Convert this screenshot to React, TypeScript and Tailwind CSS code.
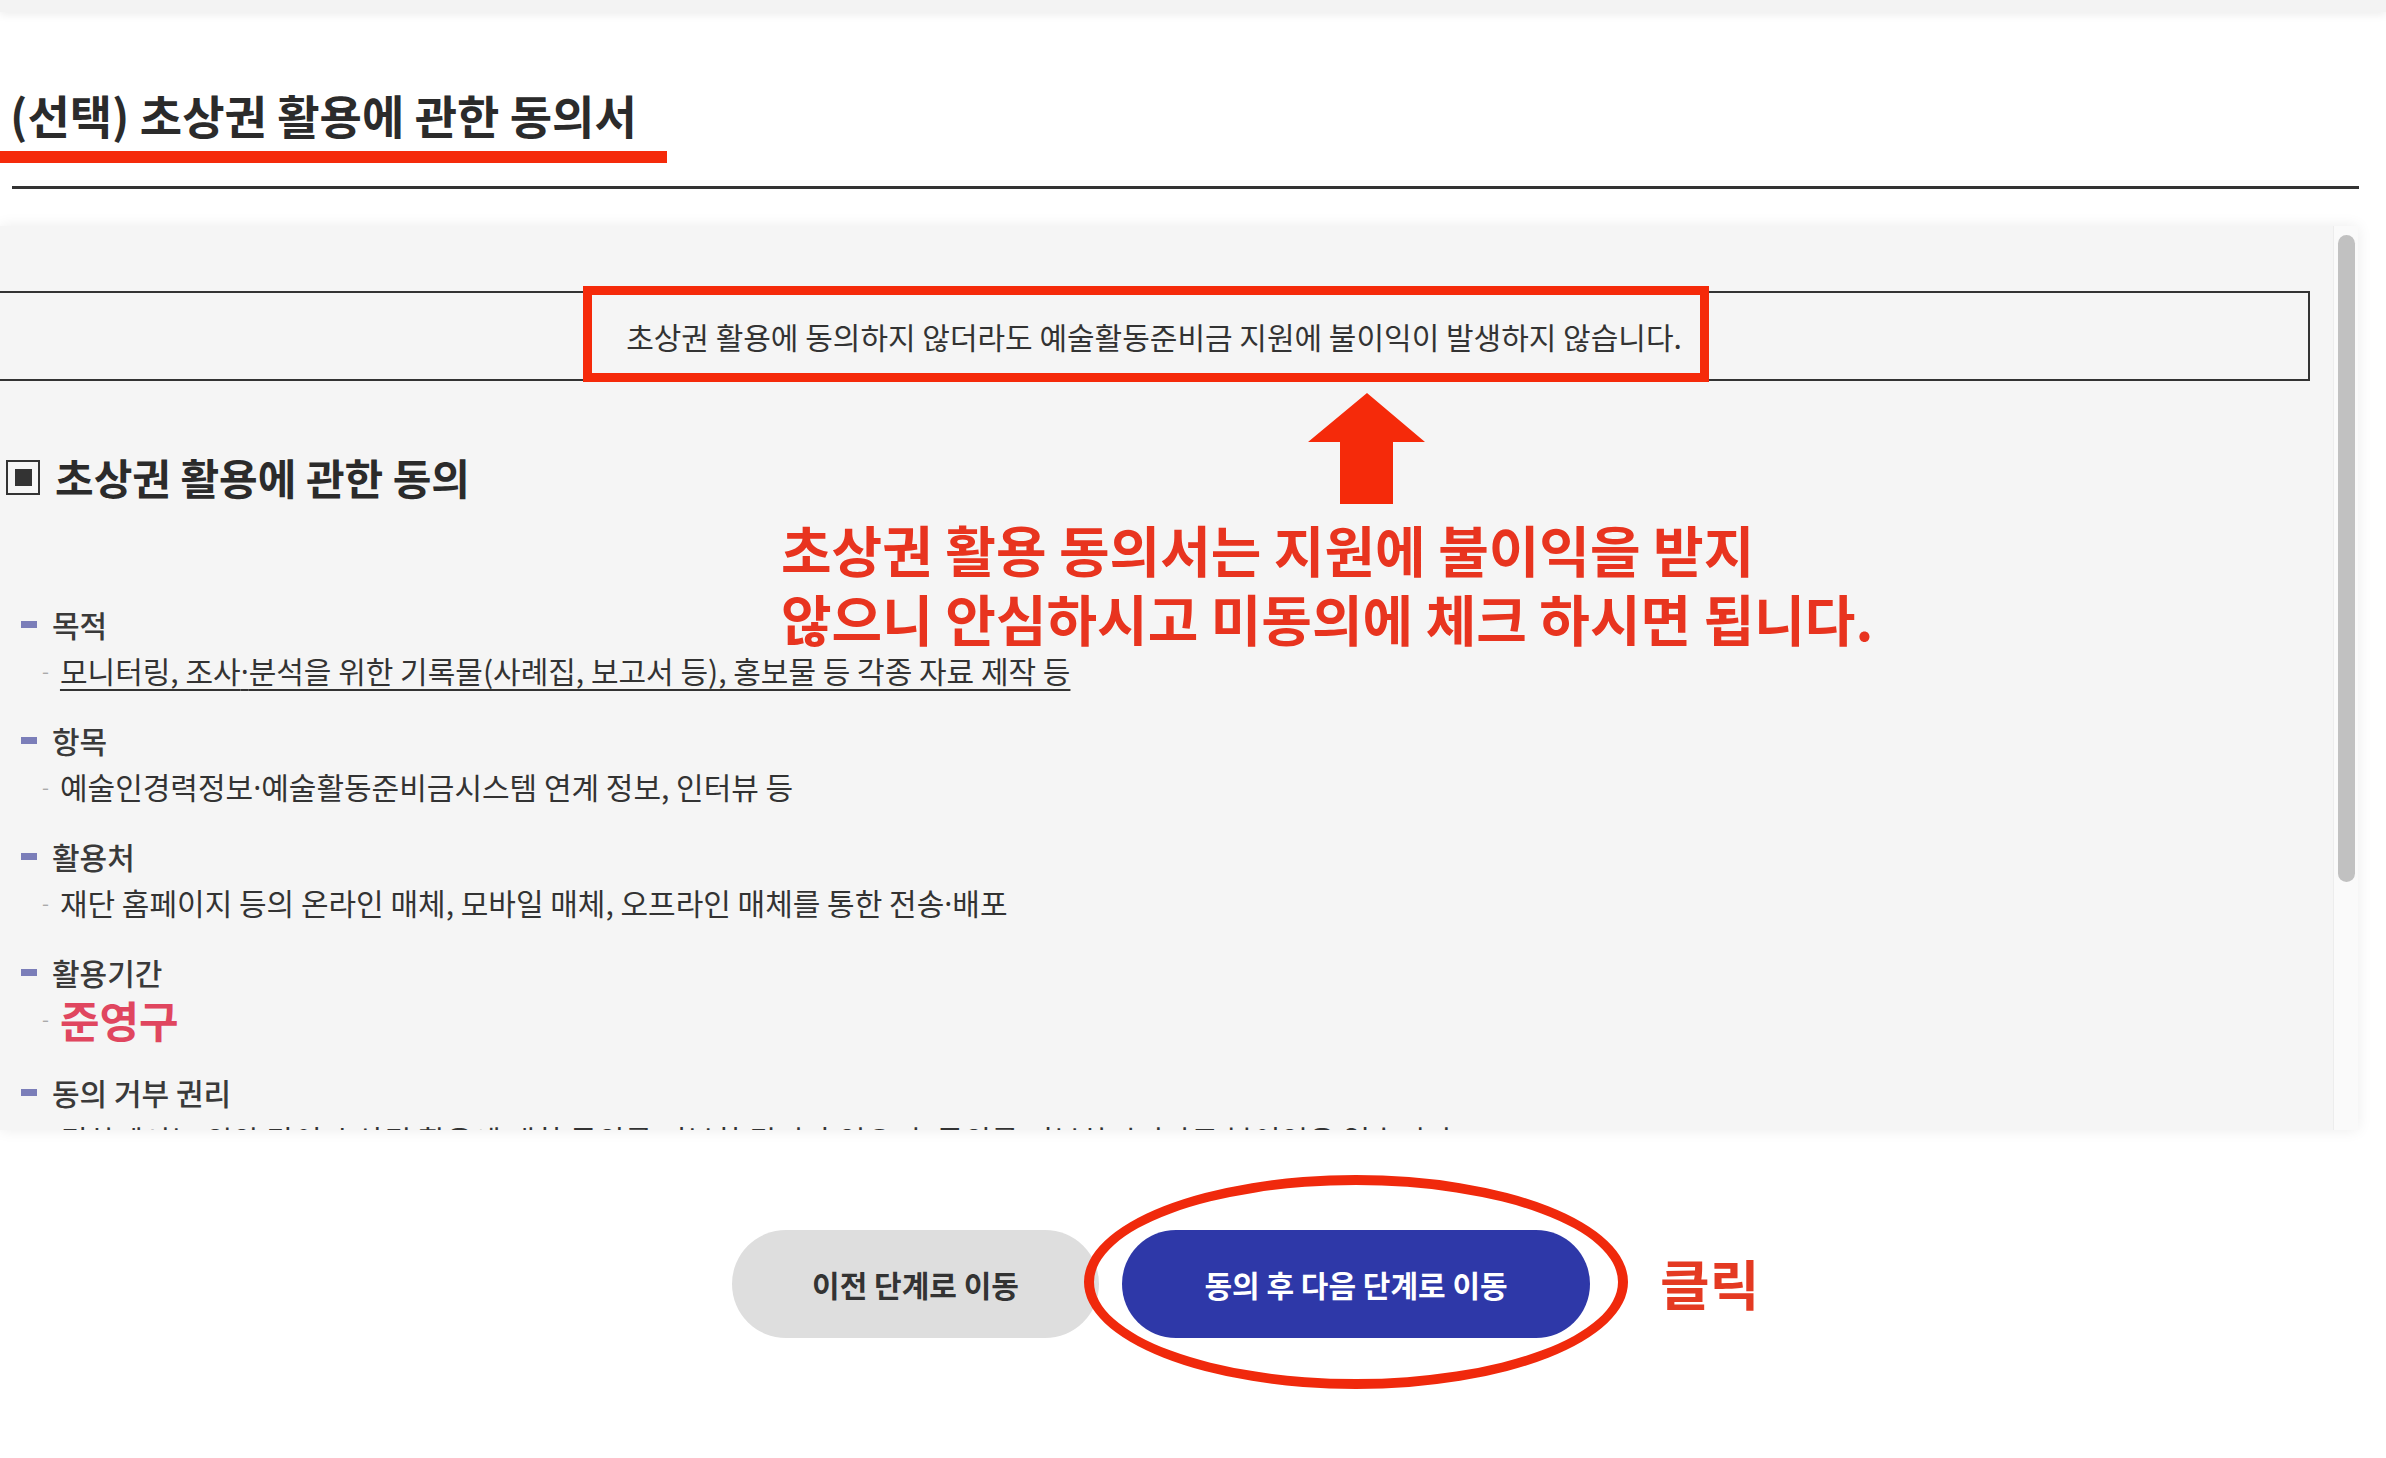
import { Fragment } from "react";
import type { ReactNode } from "react";

// Middle dot set in a latin face so it stays narrow like the original
const Dot = () => <span style={{ fontFamily: '"Noto Sans", sans-serif' }}>·</span>;

const items: { label: string; sub: ReactNode; underline?: boolean; highlight?: boolean }[] = [
  {
    label: "목적",
    sub: (
      <>
        모니터링, 조사<Dot />분석을 위한 기록물(사례집, 보고서 등), 홍보물 등 각종 자료 제작 등
      </>
    ),
    underline: true,
  },
  {
    label: "항목",
    sub: (
      <>
        예술인경력정보<Dot />예술활동준비금시스템 연계 정보, 인터뷰 등
      </>
    ),
  },
  {
    label: "활용처",
    sub: (
      <>
        재단 홈페이지 등의 온라인 매체, 모바일 매체, 오프라인 매체를 통한 전송<Dot />배포
      </>
    ),
  },
  { label: "활용기간", sub: "준영구", highlight: true },
  {
    label: "동의 거부 권리",
    sub: "귀하께서는 위와 같이 초상권 활용에 대한 동의를 거부할 권리가 있으며, 동의를 거부하시더라도 불이익은 없습니다.",
  },
];

export default function App() {
  return (
    <div
      className="relative w-[2386px] h-[1458px] overflow-hidden bg-white text-[#333]"
      style={{ fontFamily: '"Noto Sans CJK KR", "Noto Sans", sans-serif' }}
    >
      {/* top strip */}
      <div className="h-[12px] bg-[#f3f3f3] shadow-[0_3px_8px_rgba(0,0,0,0.07)]" />

      {/* Title */}
      <div className="mt-[72px] h-[60px] pl-[10px] text-[46px] leading-[60px] font-bold text-[#2b2b2b]">
        (선택) 초상권 활용에 관한 동의서
      </div>
      <div className="mt-[42px] ml-[12px] w-[2347px] h-[3px] bg-[#333]" />

      {/* Scroll panel */}
      <div className="mt-[37px] flex w-[2358px] h-[904px] shadow-[0_0_14px_rgba(0,0,0,0.08)]">
        <div className="w-[2333px] h-full overflow-hidden bg-[#f5f5f5]">
          {/* notice */}
          <div className="mt-[65px] w-[2310px] h-[90px] border-2 border-l-0 border-[#333] flex items-center justify-center text-[30px] text-[#333]">
            초상권 활용에 동의하지 않더라도 예술활동준비금 지원에 불이익이 발생하지 않습니다.
          </div>

          {/* heading */}
          <div className="mt-[68px] h-[56px] pl-[6px] flex items-center gap-[15px]">
            <div className="w-[34px] h-[35px] border-2 border-[#333] flex items-center justify-center">
              <div className="w-[17px] h-[17px] bg-[#333]" />
            </div>
            <div className="text-[42px] font-bold text-[#2b2b2b] leading-[56px]">
              초상권 활용에 관한 동의
            </div>
          </div>

          {/* list */}
          <div className="mt-[99px] flex flex-col">
            {items.map((it, i) => (
              <Fragment key={it.label}>
                <div
                  className={`h-[40px] flex items-center gap-[15px] ${
                    i === 0 ? "" : i === 4 ? "mt-[33px]" : "mt-[29px]"
                  }`}
                >
                  <div className="ml-[21px] w-[16px] h-[7px] bg-[#7b7eb9]" />
                  <div className="text-[30px] font-medium text-[#3a3a3a] leading-[40px]">
                    {it.label}
                  </div>
                </div>
                <div className="mt-[7px] h-[40px] pl-[42px] flex items-center gap-[11px]">
                  <span className="text-[20px] text-[#aaa]">-</span>
                  {it.highlight ? (
                    <span className="text-[43px] font-bold text-[#e0465f] leading-[40px]">
                      {it.sub}
                    </span>
                  ) : (
                    <span
                      className={`text-[30px] text-[#333] leading-[40px] whitespace-nowrap ${
                        it.underline ? "underline decoration-2 underline-offset-[6px]" : ""
                      }`}
                    >
                      {it.sub}
                    </span>
                  )}
                </div>
              </Fragment>
            ))}
          </div>
        </div>
        {/* scrollbar */}
        <div className="w-[25px] h-full bg-[#fafafa] border-l border-[#ececec] pt-[9px] pl-[4px]">
          <div className="w-[17px] h-[647px] rounded-full bg-[#c1c1c1]" />
        </div>
      </div>

      {/* Buttons */}
      <div className="mt-[100px] flex justify-center pr-[64px] gap-[23px]">
        <button className="w-[367px] h-[108px] rounded-full bg-[#dedede] text-[30px] font-semibold text-[#333]">
          이전 단계로 이동
        </button>
        <button className="w-[468px] h-[108px] rounded-full bg-[#2e38a8] text-[30px] font-semibold text-white">
          동의 후 다음 단계로 이동
        </button>
      </div>

      {/* Annotations */}
      <div className="absolute left-0 top-[151px] w-[667px] h-[12px] bg-[#f52a0a]" />
      <div className="absolute left-[583px] top-[286px] w-[1126px] h-[96px] border-[9px] border-[#f52a0a]" />
      <svg className="absolute left-[1308px] top-[393px]" width="117" height="111" viewBox="0 0 117 111">
        <polygon points="59,0 117,49 85,49 85,111 32,111 32,49 0,49" fill="#f52a0a" />
      </svg>
      <div className="absolute left-[781px] top-[514px] text-[55px] font-bold leading-[69px] text-[#e8341f] whitespace-nowrap">
        <div>초상권 활용 동의서는 지원에 불이익을 받지</div>
        <div>않으니 안심하시고 미동의에 체크 하시면 됩니다.</div>
      </div>
      <div className="absolute left-[1084px] top-[1175px] w-[544px] h-[214px] rounded-[50%] border-[10px] border-[#f0290c]" />
      <div className="absolute left-[1660px] top-[1248px] text-[54px] font-bold leading-[70px] text-[#e43a22]">
        클릭
      </div>
    </div>
  );
}
